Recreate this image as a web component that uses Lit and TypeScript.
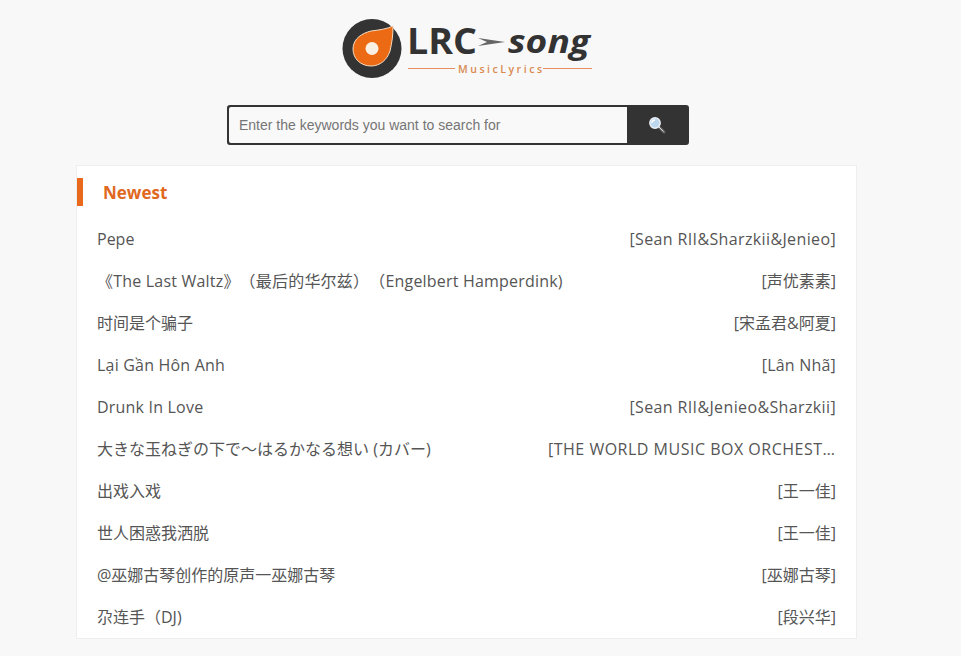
import { LitElement, html, css } from "lit";
import { customElement } from "lit/decorators.js";

type Track = [string, string, string, string];

const rows: Track[] = [
  ["Pepe", "", "[Sean RII&Sharzkii&Jenieo]", "amp"],
  ["《The Last Waltz》（最后的华尔兹）（Engelbert Hamperdink)", "latin", "[声优素素]", ""],
  ["时间是个骗子", "", "[宋孟君&阿夏]", ""],
  ["Lại Gần Hôn Anh", "latin", "[Lân Nhã]", "latin"],
  ["Drunk In Love", "latin", "[Sean RII&Jenieo&Sharzkii]", "amp"],
  ["大きな玉ねぎの下で〜はるかなる想い (カバー)", "", "[THE WORLD MUSIC BOX ORCHESTRA]", "wide"],
  ["出戏入戏", "", "[王一佳]", ""],
  ["世人困惑我洒脱", "", "[王一佳]", ""],
  ["@巫娜古琴创作的原声一巫娜古琴", "", "[巫娜古琴]", ""],
  ["尕连手（DJ)", "", "[段兴华]", ""],
];

@customElement("app-root")
export class AppRoot extends LitElement {
  static styles = css`
    :host {
      display: block;
      height: 656px;
      overflow: hidden;
      background: #f8f8f8;
      font-family: "Open Sans", "Noto Sans CJK SC", sans-serif;
      text-spacing-trim: space-all;
    }
    .page {
      width: 781px;
      margin-left: 76px;
      padding-top: 14px;
    }
    .logo {
      display: block;
      width: 260px;
      height: 70px;
      margin-left: 264px;
    }
    .logo text { font-family: "Open Sans", "Liberation Sans", sans-serif; }
    .search {
      display: flex;
      width: 462px;
      height: 40px;
      box-sizing: border-box;
      margin: 21px 0 0 151px;
      border: 2px solid #333;
      border-radius: 3px;
      background: #333;
    }
    .field {
      flex: 1;
      min-width: 0;
      background: #f9f9f9;
      border-radius: 2px 0 0 2px;
      color: #757575;
      font: 14px/36px "Liberation Sans", Arial, sans-serif;
      padding-left: 10px;
    }
    .btn {
      width: 60px;
      display: flex;
      align-items: center;
      justify-content: center;
    }
    .card {
      box-sizing: border-box;
      margin-top: 20px;
      height: 474px;
      background: #fff;
      border: 1px solid #eee;
    }
    .head {
      height: 28px;
      margin-top: 12px;
      border-left: 6px solid #e8681c;
      padding-left: 20px;
      font-size: 17px;
      line-height: 30px;
      font-weight: 700;
      color: #e0691f;
    }
    .list { margin: 12px 20px 0; }
    .row {
      display: flex;
      justify-content: space-between;
      gap: 20px;
      height: 42px;
      line-height: 42px;
      font-size: 16px;
      color: #555;
    }
    .song { white-space: nowrap; }
    .artist {
      max-width: 288px;
      white-space: nowrap;
      overflow: hidden;
      text-overflow: ellipsis;
      text-align: right;
    }
    .latin { letter-spacing: 0.2px; }
    .amp { letter-spacing: 0.37px; }
    .wide { letter-spacing: 0.5px; }
  `;

  render() {
    return html`
      <div class="page">
        <svg class="logo" viewBox="0 0 260 70">
          <circle cx="32" cy="34.5" r="29.5" fill="#333"></circle>
          <path d="M13 35 C13 24 23 19 31 17 C39 16 47 15 53 12 C53 22 52 28 50 37 C47 46 40 52 31 52 C21 52 13 45 13 35 Z" fill="#ec6a14" stroke="#f3dcc2" stroke-width="1"></path>
          <circle cx="32" cy="34.5" r="6.5" fill="#f8f0e4"></circle>
          <text x="67" y="40" font-size="36.5" font-weight="700" fill="#333" textLength="70" lengthAdjust="spacingAndGlyphs">LRC</text>
          <path d="M138 24 L165 28 L138 32 L147 28 Z" fill="#666"></path>
          <text x="168" y="39" font-size="33" font-weight="700" font-style="italic" fill="#333" textLength="82" lengthAdjust="spacingAndGlyphs">song</text>
          <path d="M68 54.5 H115 M203 54.5 H252" stroke="#e89060" stroke-width="1" fill="none"></path>
          <text x="118" y="58.5" font-size="10.5" font-weight="600" fill="#d98a50" textLength="84" lengthAdjust="spacing">MusicLyrics</text>
        </svg>
        <div class="search">
          <div class="field">Enter the keywords you want to search for</div>
          <div class="btn">
            <svg width="20" height="20" viewBox="0 0 20 20">
              <path d="M11 11 L17 17" stroke="#666" stroke-width="3" stroke-linecap="round"></path>
              <path d="M12 12 L16.5 16.5" stroke="#ddd" stroke-width="1"></path>
              <circle cx="8" cy="8" r="5.2" fill="#bcd6ee" stroke="#eef2f6" stroke-width="1.4"></circle>
              <path d="M5 8 A3 3 0 0 1 8 5" stroke="#fff" stroke-width="1.4" fill="none"></path>
            </svg>
          </div>
        </div>
        <section class="card">
          <div class="head">Newest</div>
          <div class="list">
            ${rows.map(
              ([s, sc, a, ac]) => html`<div class="row">
                <span class="song ${sc}">${s}</span>
                <span class="artist ${ac}">${a}</span>
              </div>`
            )}
          </div>
        </section>
      </div>
    `;
  }
}
